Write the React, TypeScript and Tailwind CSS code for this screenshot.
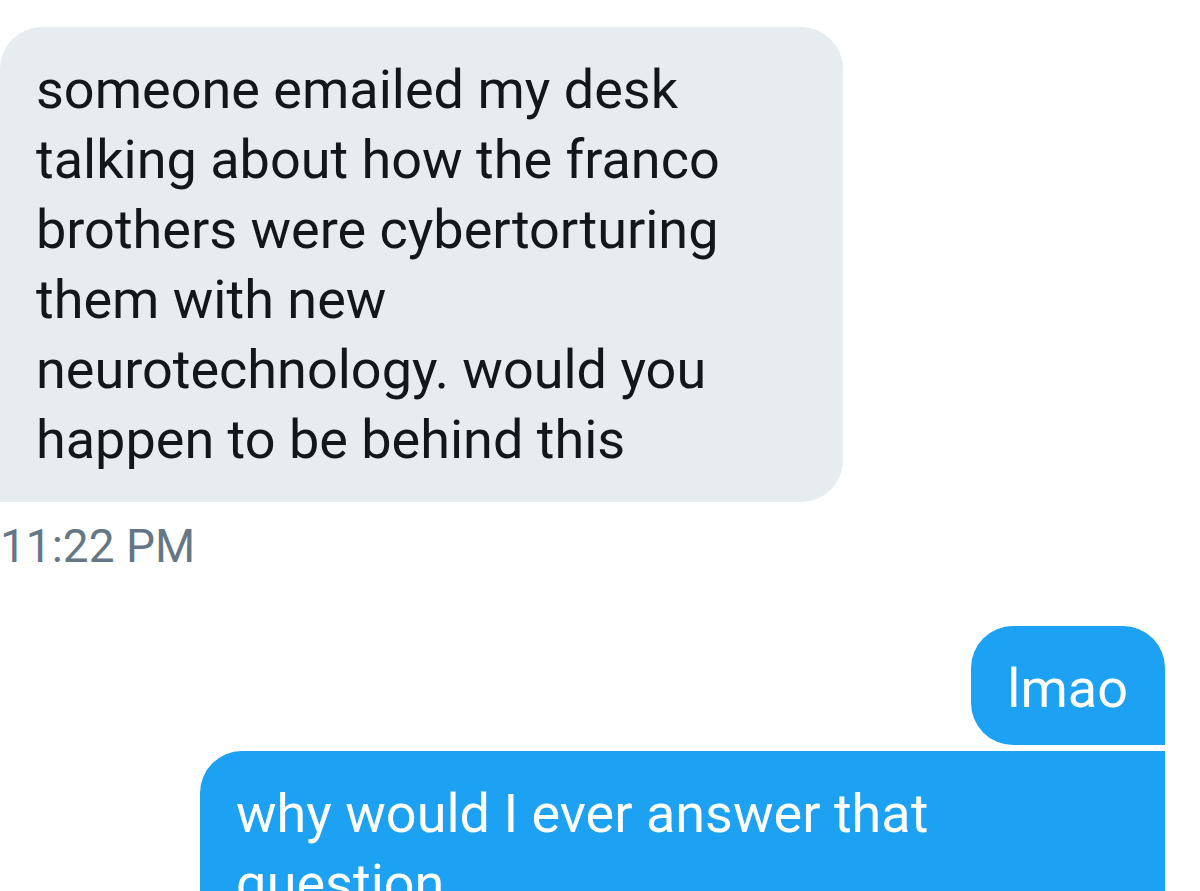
import React from "react";

const font = { fontFamily: "Roboto, 'Noto Sans', sans-serif" };

const App = () => {
  return (
    <div className="h-[891px] w-[1200px] overflow-hidden bg-white" style={font}>
      <div className="flex flex-col pt-[27px]">
        {/* incoming message */}
        <div className="w-[843px] rounded-[42px] rounded-bl-none bg-[#e6ecf0] pb-[27px] pl-[36px] pr-[60px] pt-[28px] text-[54px] leading-[70px] text-[#14171a]">
          someone emailed my desk talking about how the franco brothers were cybertorturing them with new neurotechnology. would you happen to be behind this
        </div>
        <div className="mt-[16px] text-[46px] leading-[56px] text-[#657786]">11:22 PM</div>

        {/* outgoing messages */}
        <div className="mr-[35px] mt-[52px] flex flex-col items-end gap-[6px]">
          <div className="rounded-[42px] rounded-br-none bg-[#1da1f2] pb-[21px] pl-[36px] pr-[37px] pt-[28px] text-[54px] leading-[70px] text-white">
            lmao
          </div>
          <div className="w-[965px] rounded-[42px] rounded-tr-none bg-[#1da1f2] pb-[28px] pl-[36px] pr-[36px] pt-[28px] text-[54px] leading-[70px] text-white">
            why would I ever answer that question
          </div>
        </div>
      </div>
    </div>
  );
};

export default App;
